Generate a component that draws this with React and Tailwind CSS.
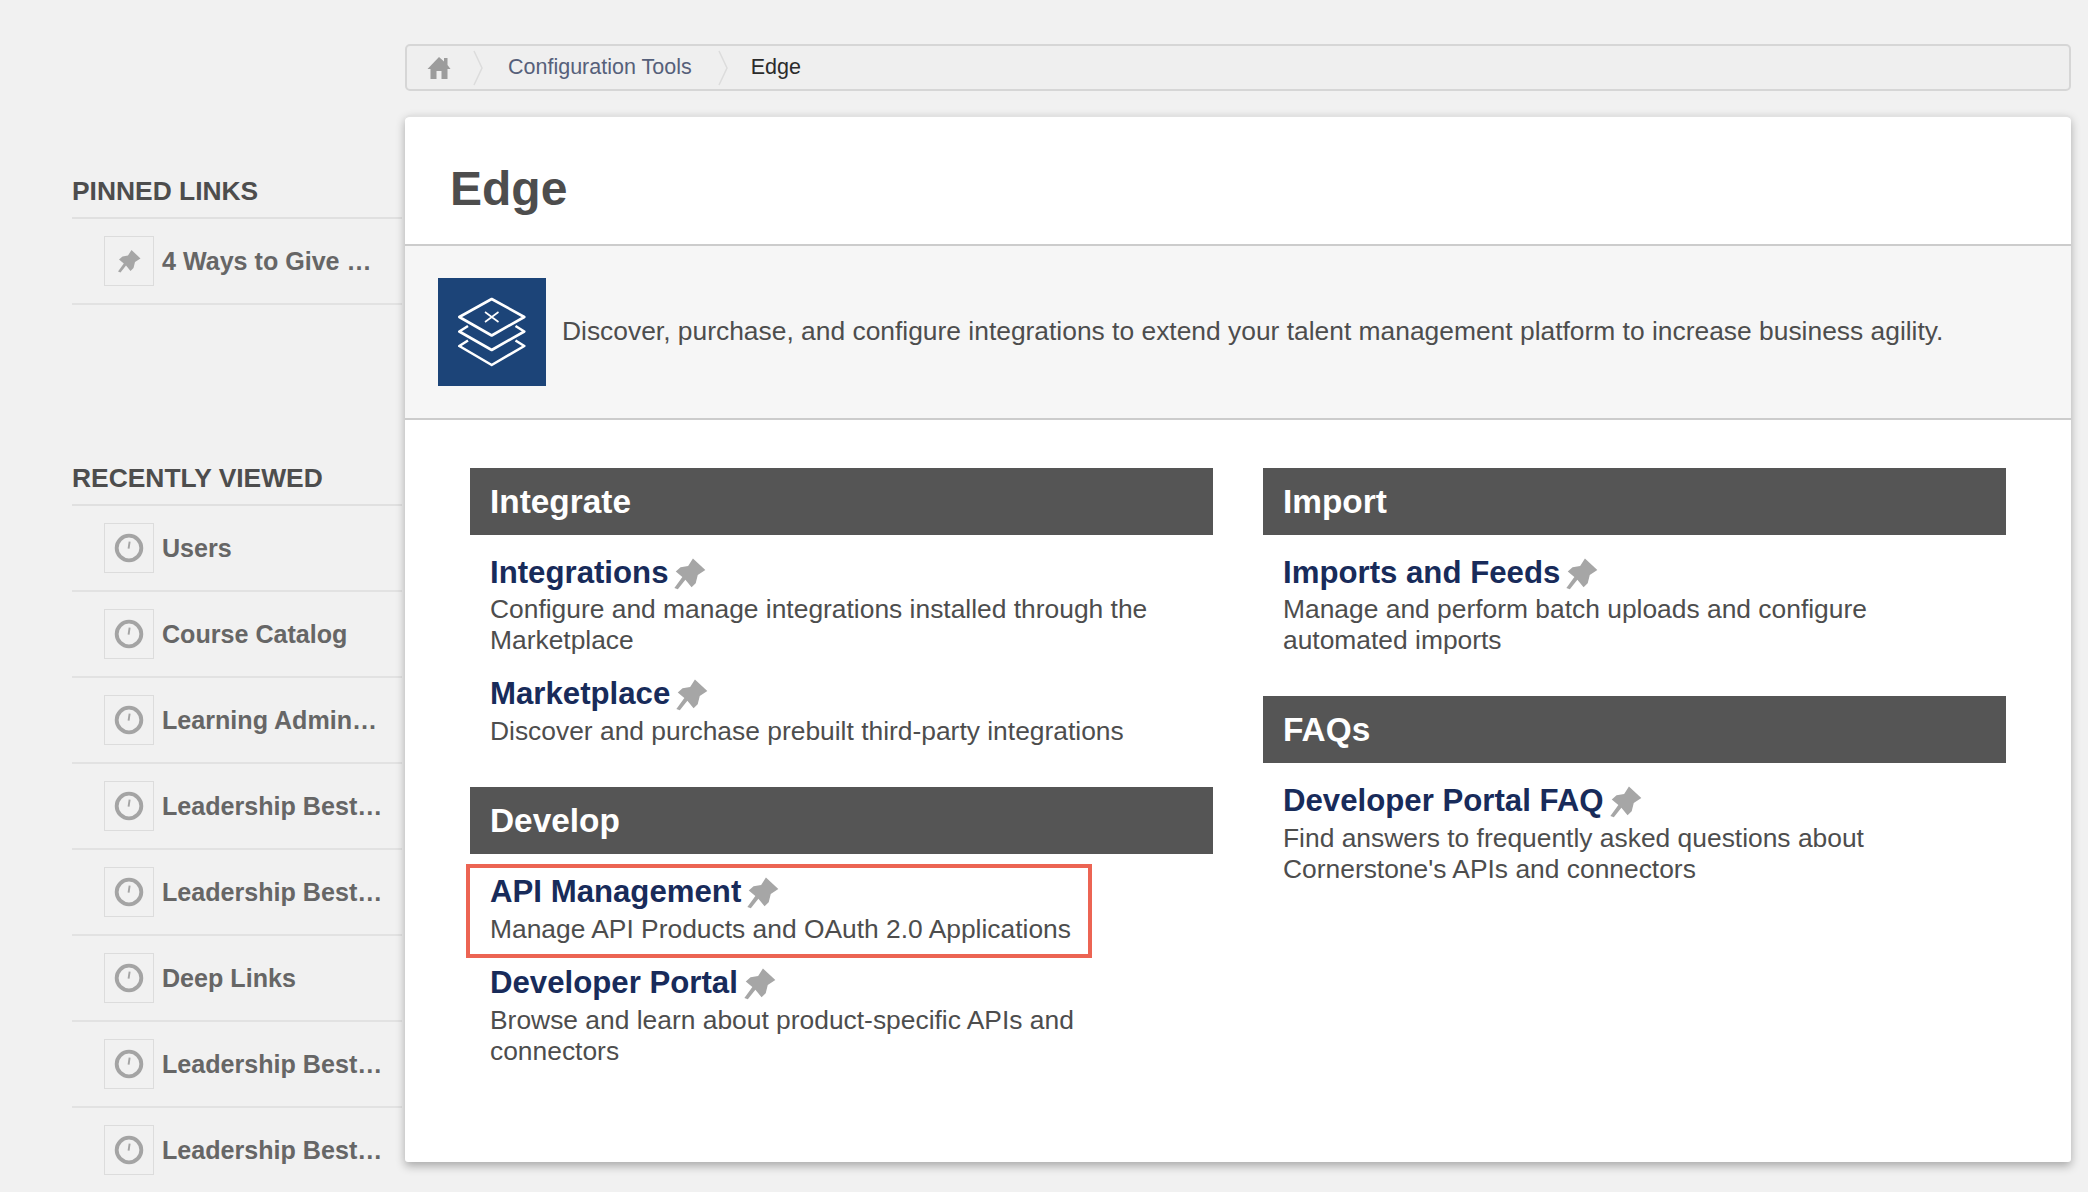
const FONT = "font-['Liberation_Sans',Arial,sans-serif]"

const recent = [
  'Users',
  'Course Catalog',
  'Learning Admin…',
  'Leadership Best…',
  'Leadership Best…',
  'Deep Links',
  'Leadership Best…',
  'Leadership Best…',
]

function PinIcon({ className }) {
  return (
    <svg viewBox="0 0 24 24" className={className} fill="#a6a6a6">
      <path d="M14.5 1 L23.5 9.5 L18 13 L16.5 19 L13.5 22 L9 16.5 L3.5 23.5 L1 22.5 L6.8 14.5 L2 10.5 L5.5 7.5 L11 6.5 Z" />
    </svg>
  )
}

function ClockIcon() {
  return (
    <svg viewBox="0 0 28 28" className="w-[30px] h-[30px] blur-[0.5px]" fill="none" stroke="#a4a4a4">
      <circle cx="14" cy="14" r="11.5" strokeWidth="3.6" />
      <path d="M14.6 8 L13.6 14.5" strokeWidth="1.8" />
    </svg>
  )
}

function HomeIcon() {
  return (
    <svg viewBox="0 0 24 24" className="w-[24px] h-[24px] ml-[20px] blur-[0.3px]" fill="#9c9c9c">
      <path d="M12 1 L17 5.5 V2 H20.5 V9 L23.5 13 H20.5 V23 H14.5 V15 H9.5 V23 H3.5 V13 H0.5 Z" />
    </svg>
  )
}

function StackIcon() {
  return (
    <svg viewBox="0 0 108 108" className="w-[108px] h-[108px]" fill="none" stroke="#ffffff" strokeWidth="2.6" strokeLinejoin="round">
      <path d="M53.7 21 L86.3 39 L53.7 57.5 L21.3 39 Z" />
      <path d="M47 34 L60.5 44 M60.5 34 L47 44" strokeWidth="1.6" />
      <path d="M30 48 L21.3 53.5 L53.7 72 L86.3 53.5 L77.5 48" />
      <path d="M30 62.5 L21.3 68 L53.7 87 L86.3 68 L77.5 62.5" />
    </svg>
  )
}

function Chevron() {
  return (
    <svg viewBox="0 0 12 36" className="w-[12px] h-[36px]" fill="none" stroke="#dcdcdc" strokeWidth="1.5">
      <path d="M2 1 L10 18 L2 35" />
    </svg>
  )
}

function SideRow({ label, icon }) {
  return (
    <div className="h-[86px] pl-[32px] flex items-center gap-[8px] border-b-2 border-[#e2e2e2]">
      <div className="w-[50px] h-[50px] flex-none border border-[#dcdcdc] flex items-center justify-center">
        {icon}
      </div>
      <span className="pt-[2px] text-[25.1px] font-bold text-[#666666] whitespace-nowrap">{label}</span>
    </div>
  )
}

function Item({ title, desc, descGap = 'mt-[4px]' }) {
  return (
    <div>
      <div className="h-[36px] flex items-center">
        <span className="text-[31.2px] font-bold text-[#182b5a] whitespace-nowrap">{title}</span>
        <PinIcon className="w-[33px] h-[33px] ml-[5px] blur-[0.5px]" />
      </div>
      <p className={`${descGap} text-[26.4px] leading-[31px] text-[#4d4d4d]`}>{desc}</p>
    </div>
  )
}

function SectionHead({ children }) {
  return (
    <div className="h-[67px] bg-[#555555] pl-[20px] pt-[2px] flex items-center text-[33.4px] font-bold text-white">
      {children}
    </div>
  )
}

export default function App() {
  return (
    <div className={`${FONT} w-[2088px] h-[1192px] overflow-hidden bg-[#f1f1f1] flex items-start`}>
      {/* sidebar */}
      <aside className="w-[330px] ml-[72px] flex-none pt-[173px]">
        <h3 className="h-[46px] text-[26.4px] leading-[36px] font-bold text-[#4d4d4d] border-b-2 border-[#e0e0e0]">PINNED LINKS</h3>
        <SideRow label="4 Ways to Give …" icon={<PinIcon className="w-[24px] h-[24px] blur-[0.5px]" />} />

        <h3 className="mt-[155px] h-[46px] text-[26.4px] leading-[36px] font-bold text-[#4d4d4d] border-b-2 border-[#e0e0e0]">RECENTLY VIEWED</h3>
        {recent.map((label, i) => (
          <SideRow key={i} label={label} icon={<ClockIcon />} />
        ))}
      </aside>

      <main className="w-[1666px] ml-[3px] flex-none pt-[44px]">
        {/* breadcrumb */}
        <div className="h-[47px] bg-[#efefef] border-2 border-[#d6d6d6] rounded-[5px] flex items-center text-[21.5px]">
          <HomeIcon />
          <span className="ml-[21px]"><Chevron /></span>
          <span className="ml-[24px] text-[#56607a]">Configuration Tools</span>
          <span className="ml-[25px]"><Chevron /></span>
          <span className="ml-[22px] text-[#2b2b2b]">Edge</span>
        </div>

        {/* card */}
        <div className="mt-[24px] h-[1047px] bg-white rounded-t-[5px] rounded-b-[3px] border-t-2 border-[#e2e2e2] shadow-[0_4px_10px_rgba(0,0,0,0.3)]">
          <div className="h-[129px] pl-[45px] pt-[16px] flex items-center border-b-2 border-[#cccccc]">
            <h1 className="text-[48px] font-bold text-[#4d4d4d]">Edge</h1>
          </div>

          <div className="h-[174px] bg-[#f6f6f6] pl-[33px] flex items-center gap-[16px] border-b-2 border-[#cccccc]">
            <div className="w-[108px] h-[108px] flex-none bg-[#1c4478]">
              <StackIcon />
            </div>
            <p className="text-[26.4px] text-[#4d4d4d] whitespace-nowrap">
              Discover, purchase, and configure integrations to extend your talent management platform to increase business agility.
            </p>
          </div>

          <div className="pt-[48px] pl-[65px] flex gap-[50px]">
            <div className="w-[743px]">
              <SectionHead>Integrate</SectionHead>
              <div className="mt-[20px] pl-[20px] pr-[40px] flex flex-col gap-[20px]">
                <Item title="Integrations" descGap="mt-[3px]" desc="Configure and manage integrations installed through the Marketplace" />
                <Item title="Marketplace" desc="Discover and purchase prebuilt third-party integrations" />
              </div>

              <div className="mt-[40px]">
                <SectionHead>Develop</SectionHead>
              </div>
              <div className="mt-[20px] pl-[20px] pr-[120px] flex flex-col gap-[20px]">
                <div className="relative">
                  <Item title="API Management" desc="Manage API Products and OAuth 2.0 Applications" />
                  {/* red annotation box */}
                  <div className="absolute left-[-24px] top-[-10px] w-[626px] h-[94px] border-4 border-[#ec6453]" />
                </div>
                <Item title="Developer Portal" desc="Browse and learn about product-specific APIs and connectors" />
              </div>
            </div>

            <div className="w-[743px]">
              <SectionHead>Import</SectionHead>
              <div className="mt-[20px] pl-[20px] pr-[120px]">
                <Item title="Imports and Feeds" descGap="mt-[3px]" desc="Manage and perform batch uploads and configure automated imports" />
              </div>

              <div className="mt-[40px]">
                <SectionHead>FAQs</SectionHead>
              </div>
              <div className="mt-[20px] pl-[20px] pr-[120px]">
                <Item title="Developer Portal FAQ" desc="Find answers to frequently asked questions about Cornerstone's APIs and connectors" />
              </div>
            </div>
          </div>
        </div>
      </main>
    </div>
  )
}
